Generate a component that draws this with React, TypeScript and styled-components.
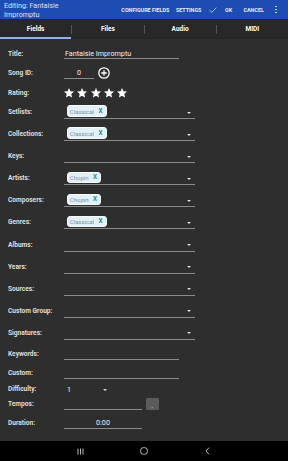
import React from "react";
import styled, { createGlobalStyle } from "styled-components";

const GlobalStyle = createGlobalStyle`
    html, body {
        margin: 0;
        padding: 0;
        background: #2e2e2e;
        font-family: Roboto, "Liberation Sans", sans-serif;
    }
    #root {
        width: 288px;
        height: 461px;
    }
`;

const Page = styled.div`
    display: flex;
    flex-direction: column;
    width: 288px;
    height: 461px;
    background: #2e2e2e;
    overflow: hidden;
`;

const Header = styled.div`
    display: flex;
    align-items: center;
    height: 19px;
    flex-shrink: 0;
    background: #1d4cb3;
    padding-left: 4px;
`;

const HeaderTitle = styled.div`
    font-size: 7.2px;
    line-height: 9px;
    color: #dbe4f6;
    margin-top: 1px;
`;

const Actions = styled.div`
    display: flex;
    align-items: center;
    margin-left: auto;
    padding-right: 11px;
    height: 100%;
`;

const Action = styled.span<{ $ml: number }>`
    margin-left: ${(p) => p.$ml}px;
    font-size: 5.4px;
    font-weight: 700;
    color: #e8eefa;
    white-space: nowrap;
`;

const Kebab = styled.div<{ $ml: number }>`
    display: flex;
    flex-direction: column;
    gap: 1.3px;
    margin-left: ${(p) => p.$ml}px;

    span {
        width: 1.6px;
        height: 1.6px;
        border-radius: 50%;
        background: #e8eefa;
    }
`;

const Tabs = styled.div`
    display: flex;
    align-items: center;
    height: 20px;
    flex-shrink: 0;
    background: #282828;
`;

const Tab = styled.div<{ $active?: boolean }>`
    flex: 1;
    height: 100%;
    display: flex;
    align-items: center;
    justify-content: center;
    font-size: 6.5px;
    font-weight: 700;
    color: #ffffff;
    box-shadow: ${(p) => (p.$active ? "inset 0 -2px 0 #8db5ea" : "none")};
`;

const TabDivider = styled.div`
    width: 1px;
    height: 9px;
    background: #555555;
`;

const Form = styled.div`
    flex: 1;
    display: flex;
    flex-direction: column;
    padding: 9px 0 0 8px;
`;

const Row = styled.div<{ $h: number; $mt: number }>`
    display: flex;
    align-items: center;
    height: ${(p) => p.$h}px;
    margin-top: ${(p) => p.$mt}px;
    flex-shrink: 0;
`;

const Label = styled.div`
    width: 56px;
    font-size: 6.6px;
    font-weight: 700;
    color: #dedede;
    white-space: nowrap;
`;

const TextInput = styled.div<{ $w: number; $center?: boolean }>`
    box-sizing: border-box;
    width: ${(p) => p.$w}px;
    height: 100%;
    display: flex;
    align-items: center;
    justify-content: ${(p) => (p.$center ? "center" : "flex-start")};
    padding-left: ${(p) => (p.$center ? 0 : 1)}px;
    border-bottom: 1px solid #8a8a8a;
    font-size: 7.2px;
    color: #f0f0f0;
`;

const Dropdown = styled.div`
    box-sizing: border-box;
    width: 131px;
    height: 100%;
    display: flex;
    align-items: center;
    padding-left: 2.5px;
    border-bottom: 1px solid #8a8a8a;
`;

const Chip = styled.div`
    box-sizing: border-box;
    display: flex;
    align-items: center;
    gap: 4.5px;
    height: 11.5px;
    padding: 0 3.3px 0 2.3px;
    border-radius: 3px;
    background: #e4f0f8;
    border: 0.5px solid #f4f9fc;
    margin-top: -1px;
`;

const ChipText = styled.span`
    font-size: 6px;
    color: #7892a4;
`;

const ChipClose = styled.span`
    font-size: 6.3px;
    font-weight: 700;
    color: #17958c;
`;

const Arrow = styled.div<{ $mr: number }>`
    width: 0;
    height: 0;
    margin-left: auto;
    margin-right: ${(p) => p.$mr}px;
    margin-top: 2px;
    border-left: 2.5px solid transparent;
    border-right: 2.5px solid transparent;
    border-top: 2.5px solid #dddddd;
`;

const Select = styled.div`
    width: 45px;
    height: 100%;
    display: flex;
    align-items: center;
    padding-left: 3px;
    box-sizing: border-box;
    font-size: 7.2px;
    color: #f0f0f0;
`;

const Stars = styled.div`
    display: flex;
    gap: 1.25px;
    margin-left: -1px;
`;

const IconSlot = styled.div<{ $ml: number }>`
    display: flex;
    margin-left: ${(p) => p.$ml}px;
`;

const SmallButton = styled.div`
    width: 13px;
    height: 12px;
    margin-left: 3.5px;
    border-radius: 1.5px;
    background: #5b5b5b;
    display: flex;
    align-items: flex-end;
    justify-content: center;
    font-size: 6px;
    line-height: 9px;
    color: #dddddd;
`;

const NavBar = styled.div`
    display: flex;
    justify-content: center;
    align-items: center;
    height: 20px;
    flex-shrink: 0;
    background: #000000;
`;

const NavSlot = styled.div`
    width: 63.3px;
    display: flex;
    justify-content: center;
    align-items: center;
`;

const Star = () => (
    <svg width="12" height="12" viewBox="0 0 24 24">
        <path fill="#ffffff" d="M12 17.27L18.18 21l-1.64-7.03L22 9.24l-7.19-.61L12 2 9.19 8.63 2 9.24l5.46 4.73L5.82 21z" />
    </svg>
);

const PlusCircle = () => (
    <svg width="12" height="12" viewBox="0 0 12 12">
        <circle cx="6" cy="6" r="5.2" fill="none" stroke="#ffffff" strokeWidth="1.3" />
        <path d="M6 3.2v5.6M3.2 6h5.6" stroke="#ffffff" strokeWidth="1.3" />
    </svg>
);

type DropRow = { label: string; chip?: string };

const dropRows: DropRow[] = [
    { label: "Setlists:", chip: "Classical" },
    { label: "Collections:", chip: "Classical" },
    { label: "Keys:" },
    { label: "Artists:", chip: "Chopin" },
    { label: "Composers:", chip: "Chopin" },
    { label: "Genres:", chip: "Classical" },
    { label: "Albums:" },
    { label: "Years:" },
    { label: "Sources:" },
    { label: "Custom Group:" },
    { label: "Signatures:" }
];

export default function App() {
    return (
        <>
            <GlobalStyle />
            <Page>
                <Header>
                    <HeaderTitle>
                        Editing: Fantaisie
                        <br />
                        Impromptu
                    </HeaderTitle>
                    <Actions>
                        <Action $ml={0}>CONFIGURE FIELDS</Action>
                        <Action $ml={6.6}>SETTINGS</Action>
                        <IconSlot $ml={7.6}>
                            <svg width="8" height="6" viewBox="0 0 8 6">
                                <path d="M0.6 3.2L2.8 5.3L7.4 0.6" fill="none" stroke="#c9d5ef" strokeWidth="0.8" />
                            </svg>
                        </IconSlot>
                        <Action $ml={8}>OK</Action>
                        <Action $ml={11.3}>CANCEL</Action>
                        <Kebab $ml={11.5}>
                            <span />
                            <span />
                            <span />
                        </Kebab>
                    </Actions>
                </Header>
                <Tabs>
                    <Tab $active>Fields</Tab>
                    <TabDivider />
                    <Tab>Files</Tab>
                    <TabDivider />
                    <Tab>Audio</Tab>
                    <TabDivider />
                    <Tab>MIDI</Tab>
                </Tabs>
                <Form>
                    <Row $h={11} $mt={0}>
                        <Label>Title:</Label>
                        <TextInput $w={115}>Fantaisie Impromptu</TextInput>
                    </Row>
                    <Row $h={11} $mt={8.5}>
                        <Label>Song ID:</Label>
                        <TextInput $w={30} $center>
                            0
                        </TextInput>
                        <IconSlot $ml={4}>
                            <PlusCircle />
                        </IconSlot>
                    </Row>
                    <Row $h={11} $mt={8.5}>
                        <Label>Rating:</Label>
                        <Stars>
                            {[0, 1, 2, 3, 4].map((i) => (
                                <Star key={i} />
                            ))}
                        </Stars>
                    </Row>
                    {dropRows.map((row, i) => (
                        <Row key={row.label} $h={14} $mt={i === 0 ? 7 : 8.1}>
                            <Label>{row.label}</Label>
                            <Dropdown>
                                {row.chip && (
                                    <Chip>
                                        <ChipText>{row.chip}</ChipText>
                                        <ChipClose>X</ChipClose>
                                    </Chip>
                                )}
                                <Arrow $mr={4.2} />
                            </Dropdown>
                        </Row>
                    ))}
                    <Row $h={11} $mt={9}>
                        <Label>Keywords:</Label>
                        <TextInput $w={115} />
                    </Row>
                    <Row $h={11} $mt={8}>
                        <Label>Custom:</Label>
                        <TextInput $w={115} />
                    </Row>
                    <Row $h={11} $mt={5}>
                        <Label>Difficulty:</Label>
                        <Select>
                            1
                            <Arrow $mr={2.5} />
                        </Select>
                    </Row>
                    <Row $h={12} $mt={3}>
                        <Label>Tempos:</Label>
                        <TextInput $w={78} />
                        <SmallButton>,</SmallButton>
                    </Row>
                    <Row $h={11} $mt={8}>
                        <Label>Duration:</Label>
                        <TextInput $w={78} $center>
                            0:00
                        </TextInput>
                    </Row>
                </Form>
                <NavBar>
                    <NavSlot>
                        <svg width="7" height="7" viewBox="0 0 7 7">
                            <path d="M1 0.5v6M3.5 0.5v6M6 0.5v6" stroke="#d0d0d0" strokeWidth="0.9" />
                        </svg>
                    </NavSlot>
                    <NavSlot>
                        <svg width="8" height="8" viewBox="0 0 8 8">
                            <rect x="0.6" y="0.6" width="6.8" height="6.8" rx="3" fill="none" stroke="#d0d0d0" strokeWidth="0.9" />
                        </svg>
                    </NavSlot>
                    <NavSlot>
                        <svg width="5" height="8" viewBox="0 0 5 8">
                            <path d="M4 0.6L1 4L4 7.4" fill="none" stroke="#d0d0d0" strokeWidth="0.9" />
                        </svg>
                    </NavSlot>
                </NavBar>
            </Page>
        </>
    );
}
